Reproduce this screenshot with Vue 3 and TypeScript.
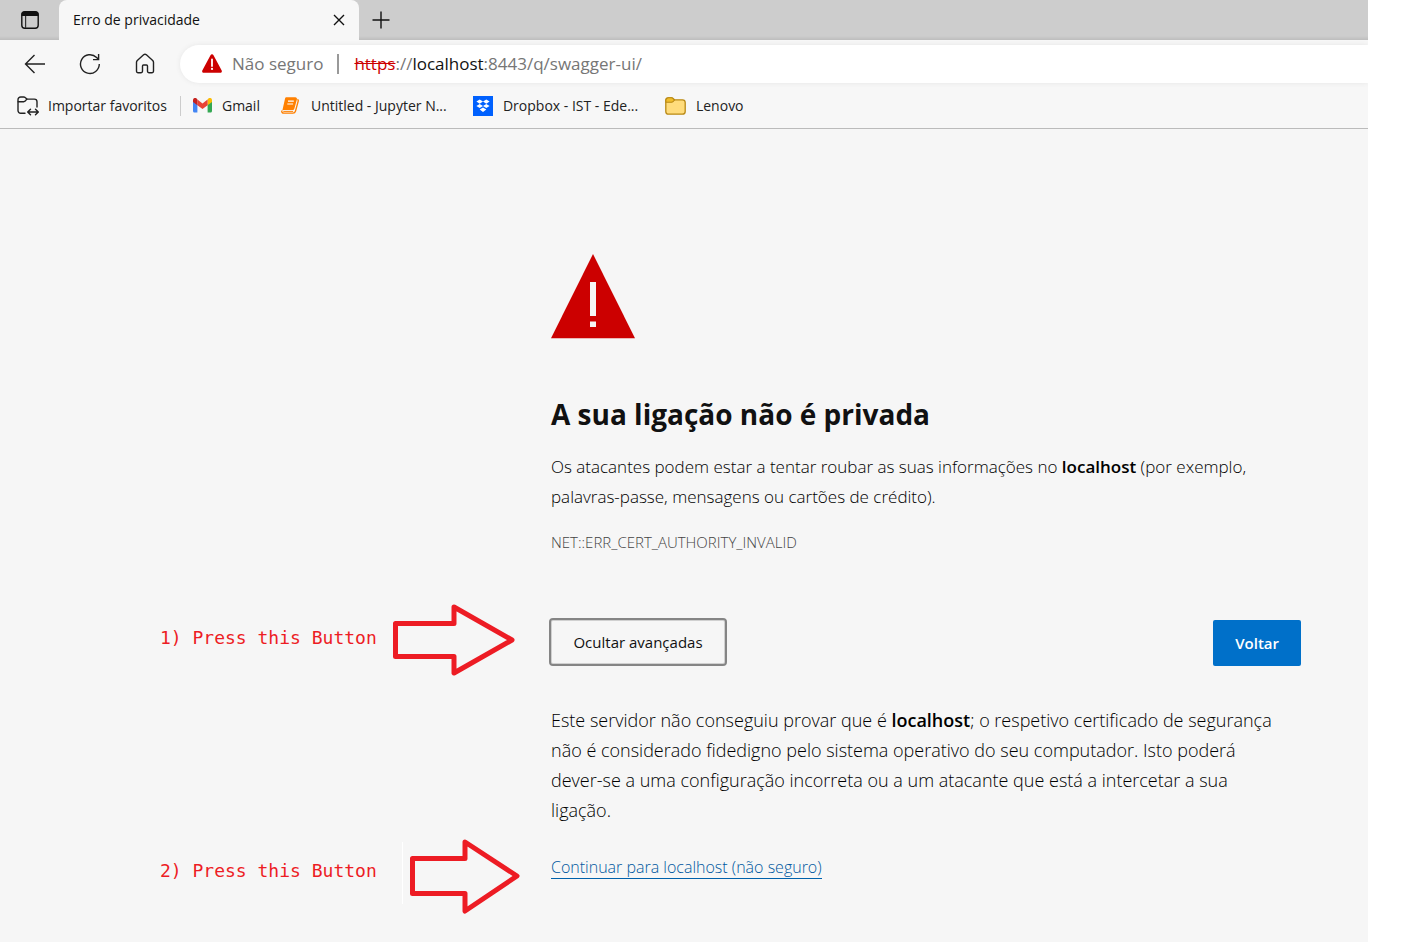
<script setup lang="ts">
import { ref } from 'vue'

interface Favourite {
  id: 'gmail' | 'jupyter' | 'dropbox' | 'folder'
  label: string
}

const favourites: Favourite[] = [
  { id: 'gmail', label: 'Gmail' },
  { id: 'jupyter', label: 'Untitled - Jupyter N...' },
  { id: 'dropbox', label: 'Dropbox - IST - Ede...' },
  { id: 'folder', label: 'Lenovo' },
]

const advancedOpen = ref(true)
</script>

<template>
  <div class="browser">
    <header>
      <div class="tabstrip">
        <button class="tab-menu" type="button" aria-label="Menu de ações de separadores">
          <svg width="20" height="20" viewBox="0 0 20 20">
            <rect x="1.8" y="1.8" width="16.4" height="16.4" rx="3" fill="none" stroke="#111" stroke-width="1.4" />
            <path d="M1.5 6V4.5a3 3 0 0 1 3-3h11a3 3 0 0 1 3 3V6z" fill="#111" />
            <path d="M5.6 6v12" stroke="#333" stroke-width="1.2" />
          </svg>
        </button>
        <div class="tab">
          <span class="tab-title">Erro de privacidade</span>
          <button type="button" aria-label="Fechar separador">
            <svg width="12" height="12" viewBox="0 0 12 12">
              <path d="M1 1l10 10M11 1L1 11" stroke="#111" stroke-width="1.4" />
            </svg>
          </button>
        </div>
        <button class="new-tab" type="button" aria-label="Novo separador">
          <svg width="18" height="18" viewBox="0 0 18 18">
            <path d="M9 .5v17M.5 9h17" stroke="#111" stroke-width="1.4" />
          </svg>
        </button>
      </div>

      <div class="toolbar">
        <nav class="nav" aria-label="Navegação">
          <button type="button" aria-label="Anterior">
            <svg width="22" height="22" viewBox="0 0 22 22" fill="none" stroke="#222" stroke-width="1.4">
              <path d="M21 11H1.5M10.5 2L1.5 11l9 9" />
            </svg>
          </button>
          <button type="button" aria-label="Atualizar">
            <svg width="22" height="22" viewBox="0 0 22 22" fill="none" stroke="#222" stroke-width="1.4">
              <path d="M20.3 11A9.4 9.4 0 1 1 17.6 4.5L19.6 6.5M19.6 1v5.6h-5.6" />
            </svg>
          </button>
          <button type="button" aria-label="Página principal">
            <svg width="22" height="22" viewBox="0 0 22 22" fill="none" stroke="#222" stroke-width="1.4" stroke-linejoin="round">
              <path d="M2.5 9.3c0-.7.3-1.3.8-1.8L9.6 1.8c.8-.7 2-.7 2.8 0l6.3 5.7c.5.5.8 1.1.8 1.8v9c0 .8-.6 1.4-1.4 1.4h-3.2c-.8 0-1.4-.6-1.4-1.4V13c0-.6-.4-1-1-1h-3c-.6 0-1 .4-1 1v5.3c0 .8-.6 1.4-1.4 1.4H3.9c-.8 0-1.4-.6-1.4-1.4z" />
            </svg>
          </button>
        </nav>
        <div class="omnibox">
          <button class="security" type="button">
            <svg width="20" height="19" viewBox="0 0 20 19">
              <path d="M8.5 1.2a1.7 1.7 0 0 1 3 0l8.2 15.2c.6 1.1-.2 2.4-1.5 2.4H1.8C.5 18.8-.3 17.5.3 16.4z" fill="#c00" />
              <path d="M10 5.5v6.5" stroke="#fff" stroke-width="1.8" stroke-linecap="round" />
              <circle cx="10" cy="14.9" r="1.1" fill="#fff" />
            </svg>
            Não seguro
          </button>
          <span class="rule"></span>
          <div class="url" role="textbox" contenteditable="true" spellcheck="false" aria-label="Endereço"><s>https</s>://<b>localhost</b>:8443/q/swagger-ui/</div>
        </div>
      </div>

      <nav class="favourites" aria-label="Favoritos">
        <button class="import" type="button">
          <svg width="22" height="20" viewBox="0 0 22 20" fill="none" stroke="#222" stroke-width="1.4" stroke-linejoin="round" stroke-linecap="round">
            <path d="M8 17.3H3.7c-1.5 0-2.7-1.2-2.7-2.7V3.7C1 2.2 2.2 1 3.7 1h3c.6 0 1.1.2 1.5.6l1.6 1.5h7.5c1.5 0 2.7 1.2 2.7 2.7V11" />
            <path d="M1.2 5.7h5.5c.6 0 1.1-.2 1.5-.6l1.6-2" />
            <path d="M11 16h10M13.5 13.2L10.7 16l2.8 2.8M18.5 13.2l2.8 2.8-2.8 2.8" />
          </svg>
          Importar favoritos
        </button>
        <a v-for="item in favourites" :key="item.id" :class="item.id" href="#">
          <svg v-if="item.id === 'gmail'" width="19" height="15" viewBox="0 0 19 15">
            <path d="M0 2.5V13c0 .9.6 1.5 1.4 1.5h3V6z" fill="#4285f4" />
            <path d="M14.6 6v8.5h3c.8 0 1.4-.6 1.4-1.5V2.5z" fill="#34a853" />
            <path d="M14.6 1.6v5.6L19 3.9V2.2C19 .2 16.9-.8 15.4.4z" fill="#fbbc04" />
            <path d="M4.4 7.2V1.6l5.1 3.8 5.1-3.8v5.6L9.5 11z" fill="#ea4335" />
            <path d="M0 2.2v1.7l4.4 3.3V1.6L3.6.4C2.1-.8 0 .2 0 2.2z" fill="#c5221f" />
          </svg>
          <svg v-else-if="item.id === 'jupyter'" width="18" height="17" viewBox="0 0 18 17">
            <path d="M5.6.3h8.7c1.2 0 1.900 1 1.600 2.100l-2.500 9.100c-.3 1.100-1 1.600-2.100 1.600H3.200c-1 0-1.700.4-2 1.100L4 1.700C4.200.8 4.800.3 5.600.3z" fill="#ff8000" />
            <path d="M7 4.200h5.800M6.300 7h5.800" stroke="#fff" stroke-width="1.200" />
            <path d="M16.400 2.400c.7.300 1 .9.800 1.700l-2.700 10c-.4 1.400-1.200 2-2.500 2H2.900c-1.600 0-2.400-1-2.100-2.400" fill="none" stroke="#ff8000" stroke-width="1.400" />
            <path d="M2.300 14.400h9.800" stroke="#ff8000" />
          </svg>
          <svg v-else-if="item.id === 'dropbox'" width="20" height="20" viewBox="0 0 20 20">
            <path d="M0 0h20v20H0z" fill="#0061fe" />
            <path d="M6.700 3.500L10 5.600 6.700 7.700 3.400 5.600zM13.300 3.500l3.300 2.100-3.300 2.100L10 5.600zM6.700 7.900L10 10l-3.300 2.100L3.400 10zM13.300 7.900l3.300 2.100-3.300 2.100L10 10zM10 11.500l3.300 2.100L10 15.900l-3.300-2.300z" fill="#fff" />
          </svg>
          <svg v-else width="21" height="18" viewBox="0 0 21 18">
            <path d="M3.5.8h3c.6 0 1.2.2 1.6.7l1.3 1.3h8.1c1.5 0 2.7 1.2 2.7 2.7v9c0 1.5-1.2 2.7-2.7 2.7h-14C2 17.2.8 16 .8 14.5v-11C.8 2 2 .8 3.5.8z" fill="#ffdc7c" stroke="#b98914" stroke-width="1.3" />
            <path d="M1 5.3h5.5c.6 0 1.1-.2 1.5-.6l1.4-1.6L8 1.5C7.6 1 7 .8 6.400.8H3.500C2 .8.8 2 .8 3.500z" fill="#f0bd2c" stroke="#b98914" stroke-width="1.1" />
          </svg>
          {{ item.label }}
        </a>
      </nav>
    </header>

    <main>
      <section class="intro">
        <svg width="84" height="85" viewBox="0 0 84 85" role="img" aria-label="Aviso">
          <path d="M42 0l42 84.300H0z" fill="#c00" />
          <path d="M39 28h6v34h-6zM39 67.500h6v5.500h-6z" fill="#f6f6f6" />
        </svg>
        <h1>A sua ligação não é privada</h1>
        <p>
          Os atacantes podem estar a tentar roubar as suas informações no <strong>localhost</strong> (por exemplo, palavras-passe, mensagens ou cartões de crédito).
        </p>
        <div class="code">NET::ERR_CERT_AUTHORITY_INVALID</div>
      </section>

      <div class="note">
        <span class="note-text">1) Press this Button</span>
        <svg class="arrow" width="122" height="72" viewBox="0 0 122 72">
          <path d="M2.500 19.500H61V3l58 33-58 33V52.500H2.500z" />
        </svg>
      </div>
      <div class="actions">
        <button class="details" type="button" :aria-expanded="advancedOpen" @click="advancedOpen = !advancedOpen">Ocultar avançadas</button>
        <button class="back" type="button">Voltar</button>
      </div>

      <p v-show="advancedOpen" class="explanation">
        Este servidor não conseguiu provar que é <strong>localhost</strong>; o respetivo certificado de segurança não é considerado fidedigno pelo sistema operativo do seu computador. Isto poderá dever-se a uma configuração incorreta ou a um atacante que está a intercetar a sua ligação.
      </p>

      <div class="note second">
        <span class="note-text">2) Press this Button</span>
        <span class="seam"></span>
        <svg class="arrow" width="110" height="75" viewBox="0 0 110 75">
          <path d="M2.500 19.500H55V3l52 34-52 35V54.500H2.500z" />
        </svg>
      </div>
      <div v-show="advancedOpen" class="proceed">
        <a href="#">Continuar para localhost (não seguro)</a>
      </div>
    </main>
  </div>
</template>

<style>
body {
  margin: 0;
  background: #fff;
}
</style>

<style scoped>
.browser {
  min-height: 100vh;
  margin-right: 47px;
  overflow-x: clip;
  background: #f6f6f6;
  color: #111;
  font-family: "Open Sans", "Noto Sans", sans-serif;
  font-size: 14px;
}
button {
  padding: 0;
  border: 0;
  background: none;
  color: inherit;
  font: inherit;
  cursor: pointer;
}
svg {
  display: block;
  flex: none;
}
header {
  background: #f7f7f7;
  border-bottom: 1px solid #bbb;
}
.tabstrip {
  display: flex;
  height: 40px;
  background: linear-gradient(#cdcdcd 36px, #bdbdbd);
}
.tab-menu {
  display: grid;
  place-items: center;
  width: 59px;
}
.tab {
  display: flex;
  align-items: center;
  justify-content: space-between;
  box-sizing: border-box;
  width: 300px;
  padding: 0 14px;
  border-radius: 8px 8px 0 0;
  background: #f7f7f7;
}
.tab-title {
  line-height: 18px;
}
.new-tab {
  display: grid;
  place-items: center;
  width: 44px;
}
.toolbar {
  display: flex;
  align-items: center;
  height: 47px;
}
.nav {
  display: flex;
  gap: 33px;
  width: 156px;
  padding-left: 24px;
}
.omnibox {
  display: flex;
  flex: 1;
  align-items: center;
  height: 38px;
  padding-left: 22px;
  border-radius: 19px 0 0 19px;
  background: #fff;
  box-shadow: 0 0 5px #e6e6e6;
  color: #767676;
  font-size: 17px;
}
.security {
  display: flex;
  align-items: center;
  gap: 10px;
}
.rule {
  width: 2px;
  height: 20px;
  margin: 0 15px 0 14px;
  background: #999;
}
.url {
  flex: 1;
  outline: 0;
}
.url s {
  color: #c00;
}
.url b {
  color: #111;
  font-weight: 400;
}
.favourites {
  display: flex;
  align-items: center;
  gap: 21px;
  height: 37px;
  padding: 0 17px 4px;
}
.favourites a,
.import {
  display: flex;
  align-items: center;
  gap: 10px;
  color: #222;
  text-decoration: none;
  white-space: nowrap;
}
.import {
  gap: 9px;
  height: 20px;
  padding-right: 13px;
  border-right: 1px solid #ccc;
  margin-right: -9px;
}
.favourites .jupyter,
.favourites .dropbox {
  box-sizing: border-box;
  min-width: 171px;
}
.favourites .jupyter {
  gap: 12px;
}
main {
  display: grid;
  grid-template-columns: minmax(391px, 1fr) minmax(0, 750px);
  padding: 125px 67px 28px 160px;
}
.intro,
.explanation,
.actions,
.proceed {
  grid-column: 2;
}
.intro {
  padding-bottom: 52px;
}
h1 {
  margin: 55px 0 18px;
  font-size: 28px;
  font-weight: 700;
  line-height: 40px;
}
p {
  margin: 0;
  color: #000;
  font-size: 17px;
  font-weight: 300;
  line-height: 30px;
}
strong {
  font-weight: 600;
}
.code {
  margin-top: 20px;
  color: #444;
  font-size: 15px;
  font-weight: 300;
  line-height: 20px;
}
.note {
  display: flex;
  grid-column: 1;
  gap: 13px;
}
.note-text {
  min-width: 220px;
  padding-top: 22px;
  color: #ed1c24;
  font-family: "DejaVu Sans Mono", "Liberation Mono", monospace;
  font-size: 18px;
  line-height: 24px;
  white-space: nowrap;
}
.second {
  gap: 0;
}
.second .note-text {
  padding-top: 20px;
}
.seam {
  width: 1px;
  height: 62px;
  margin: 3px 7px 0 22px;
  background: #fff;
}
.arrow path {
  fill: none;
  stroke: #ed1c24;
  stroke-width: 5;
  stroke-linejoin: round;
}
.actions {
  display: flex;
  align-items: flex-start;
  justify-content: space-between;
  padding-top: 16px;
}
.details {
  min-width: 174px;
  height: 44px;
  border-radius: 2px;
  outline: 2px solid #858585;
  box-shadow: inset 0 0 0 1px #d0d0d0;
  font-size: 15px;
}
.back {
  height: 46px;
  padding: 0 22px;
  border-radius: 2px;
  background: #0070c9;
  color: #fff;
  font-size: 15px;
  font-weight: 600;
}
.explanation {
  margin: 29px 0 14px;
  padding-right: 14px;
  font-size: 18px;
}
.proceed {
  padding-top: 16px;
  font-size: 16px;
  font-weight: 300;
  line-height: 24px;
}
.proceed a {
  border-bottom: 1px solid #0061ab;
  color: #0058a0;
  text-decoration: none;
}
</style>
